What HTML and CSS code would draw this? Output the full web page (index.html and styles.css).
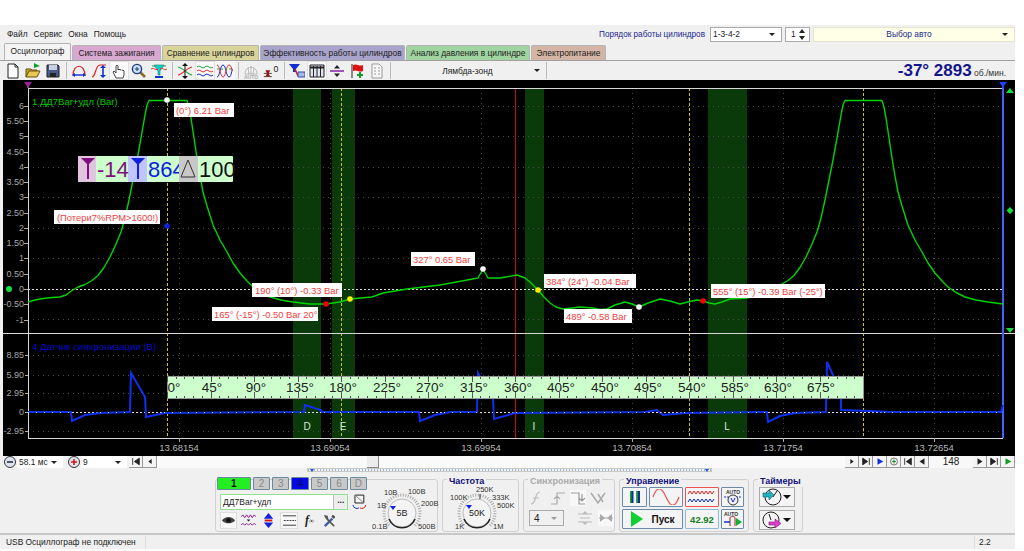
FILE: index.html
```html
<!DOCTYPE html>
<html>
    <head>
        <meta charset="utf-8">
        <title>Осциллограф</title>
        <link rel="stylesheet" href="styles.css">
    </head>
    <body>
        <div class="app">
            <div class="menubar">
                <span class="menuitem">Файл</span>
                <span class="menuitem">Сервис</span>
                <span class="menuitem">Окна</span>
                <span class="menuitem">Помощь</span>
                <span class="orderlabel">Порядок работы цилиндров</span>
                <div class="combo ordercombo"><span>1-3-4-2</span><i class="arrow"></i></div>
                <div class="combo spin"><span>1</span>
                    <svg width="8" height="11" viewBox="0 0 8 11"><path d="M4 0l3 4H1zM4 11L1 7h6z" fill="#222"/></svg>
                </div>
                <div class="combo autocombo"><span class="autotext">Выбор авто</span><i class="arrow"></i></div>
            </div>

            <div class="tabs">
                <div class="tab active">Осциллограф</div>
                <div class="tab t-purple">Система зажигания</div>
                <div class="tab t-yellow">Сравнение цилиндров</div>
                <div class="tab t-violet">Эффективность работы цилиндров</div>
                <div class="tab t-green">Анализ давления в цилиндре</div>
                <div class="tab t-brown">Электропитание</div>
            </div>

            <div class="toolbar">
                <div class="tool"><svg viewBox="0 0 16 16"><path d="M3 1h7l3 3v11H3z" fill="#fff" stroke="#222"/><path d="M10 1v3h3" fill="none" stroke="#222"/></svg></div>
                <div class="tool"><svg viewBox="0 0 16 16"><path d="M1 14V6h5l1 1h5v2H4z" fill="#c8a030" stroke="#6a5010"/><path d="M1 14l3-6h11l-3 6z" fill="#e8c850" stroke="#6a5010"/><path d="M9 5V0l6 3z" fill="#10a030"/></svg></div>
                <div class="tool"><svg viewBox="0 0 16 16"><path d="M2 2h11l1 1v11H2z" fill="#4a5a8a" stroke="#222"/><path d="M4 2h8v5H4z" fill="#c8d0e0"/><path d="M5 10h6v4H5z" fill="#222"/></svg></div>
                <i class="sep"></i>
                <div class="tool"><svg viewBox="0 0 16 16"><path d="M2 13C2 0 14 0 14 13" fill="none" stroke="#e02020" stroke-width="1.2"/><path d="M1 12l3-2v4zM15 12l-3-2v4z" fill="#1030d0"/><path d="M3 12h10" stroke="#1030d0" stroke-width="1.4"/></svg></div>
                <div class="tool"><svg viewBox="0 0 16 16"><path d="M1 14C5 14 4 2 9 2h6" fill="none" stroke="#e02020" stroke-width="1.2"/><path d="M12 2l-3 3h6zM12 15l-3-3h6z" fill="#1030d0"/><path d="M12 4v9" stroke="#1030d0" stroke-width="1.6"/></svg></div>
                <div class="tool on"><svg viewBox="0 0 16 16"><path d="M5 15L2 9l1-1 2 2V3l1-1 1 1v4l1-1 1 1 1-.5 1 1 1-.5 1 1v4l-1 3z" fill="#fff" stroke="#333" stroke-width=".9"/></svg></div>
                <div class="tool"><svg viewBox="0 0 16 16"><path d="M9 9l5 5" stroke="#8a6a30" stroke-width="2.6"/><circle cx="6" cy="6" r="4.6" fill="#c8e0f8" stroke="#203a80" stroke-width="1.4"/><path d="M4 6h4M6 4v4" stroke="#203a80"/></svg></div>
                <div class="tool"><svg viewBox="0 0 16 16"><path d="M3 2h10L9 8v4H7V8z" fill="#10d0c0" stroke="#108080" stroke-width=".6"/><path d="M0 6c3-2 4 2 7 0M9 6c3-2 4 2 7 0" fill="none" stroke="#e03030"/><path d="M1 3h3M12 3h3" stroke="#20a020"/><path d="M4 14h8" stroke="#1030d0" stroke-width="2"/></svg></div>
                <i class="sep"></i>
                <div class="tool"><svg viewBox="0 0 16 16"><path d="M1 4c5 1 9 7 14 8" fill="none" stroke="#20b040" stroke-width="1.1"/><path d="M1 12c5-1 9-7 14-8" fill="none" stroke="#e03030" stroke-width="1.1"/><path d="M8 0l-3 3h6zM8 16l-3-3h6z" fill="#111"/><path d="M8 3v10" stroke="#111"/></svg></div>
                <div class="tool on"><svg viewBox="0 0 16 16"><path d="M0 4c3-3 5 3 8 0s5 3 8 0" fill="none" stroke="#20a040"/><path d="M0 8c3-3 5 3 8 0s5 3 8 0" fill="none" stroke="#e03030"/><path d="M0 12c3-3 5 3 8 0s5 3 8 0" fill="none" stroke="#1030d0"/></svg></div>
                <div class="tool on2"><svg viewBox="0 0 16 16"><path d="M0 14C3 14 3 2 6 2s3 12 6 12 2-8 4-8" fill="none" stroke="#1030d0"/><path d="M0 2c3 0 3 12 6 12s3-12 6-12 2 6 4 6" fill="none" stroke="#e03030"/><path d="M0 6h16" stroke="#20a040" stroke-dasharray="2 2"/></svg></div>
                <i class="sep"></i>
                <div class="tool"><svg viewBox="0 0 16 16"><path d="M2 11C2 2 14 2 14 11zM8 3v8M5 5l1 6M11 5l-1 6" fill="#f4f4f4" stroke="#aaa" stroke-width=".8"/><text x="8" y="15.5" class="tiny gray" text-anchor="middle">AUTO</text></svg></div>
                <div class="tool"><svg viewBox="0 0 20 16"><text x="13" y="9" class="num">0</text><path d="M1 11h10M1 15h10" stroke="#222"/><path d="M3 7h6L7 11l2 4H3l2-4z" fill="#a01010"/></svg></div>
                <i class="sep"></i>
                <div class="tool"><svg viewBox="0 0 16 16"><path d="M0 1h11L7 6v3H4V6z" fill="#1030d0"/><path d="M6 6l3 7" stroke="#e02020" stroke-width="1.6"/><path d="M9 9h7v5H9z" fill="#a8b8e8" stroke="#3050a0"/></svg></div>
                <div class="tool on"><svg viewBox="0 0 16 16"><path d="M1 2h14v12H1z" fill="#dfe4f0" stroke="#222"/><path d="M1 4.5h14" stroke="#222" stroke-width="2"/><path d="M4.5 3v11M8 3v11M11.5 3v11" stroke="#222"/></svg></div>
                <div class="tool"><svg viewBox="0 0 16 16"><path d="M1 8h14" stroke="#8010a0" stroke-width="1.4"/><path d="M8 2l-3 3.5h6zM8 14l-3-3.500h6z" fill="#222"/></svg></div>
                <div class="tool"><svg viewBox="0 0 16 16"><path d="M3 1v14" stroke="#222"/><path d="M4 2c4-2 6 2 10 0v6c-4 2-6-2-10 0z" fill="#e01010"/><path d="M8 12h6M11 9v6" stroke="#10a030" stroke-width="2"/></svg></div>
                <div class="tool"><svg viewBox="0 0 16 16"><path d="M3 1h7l3 3v11H3z" fill="#f8f8f8" stroke="#999"/><path d="M5 5h2M5 8h2M5 11h2M9 5h2M9 8h2M9 11h2" stroke="#999"/></svg></div>
                <i class="sep"></i>
                <div class="lambda"><span class="lambdatext">Лямбда-зонд</span><i class="arrow"></i></div>
                <i class="sep"></i>
                <div class="rpm"><b>-37° 2893</b> <small>об./мин.</small></div>
            </div>

            <svg class="scope" width="1012" height="376" viewBox="3 80 1012 376">
                <path class="band" d="M293 88h28v350h-28zM332 88h23v350h-23zM525 88h19v350h-19zM708 88h39v350h-39z"/>
                <path class="grid" d="M28 106h975M28 136.500h975M28 167h975M28 197.500h975M28 228h975M28 258h975M28 319.500h975M28 355h975M28 375h975M28 393h975M28 431h975"/>
                <path class="grid" d="M179 88v350M330 88v350M481 88v350M632 88v350M783 88v350M934 88v350"/>
                <path class="zero" d="M28 289h975M28 412h975"/>
                <path class="cursor" d="M167 88v350M341 88v350M689 88v350M863 88v350"/>
                <path class="redline" d="M515 88v350"/>

                <path class="axis" d="M3 333h1012M28 88h975M28 438h975M28 88v350"/>
                <path class="rightaxis" d="M1003 88v350"/>
                <path class="ticks" d="M24 106h4M24 121h4M24 136h4M24 152h4M24 167h4M24 182h4M24 197h4M24 213h4M24 228h4M24 243h4M24 258h4M24 274h4M24 289h4M24 304h4M24 320h4"/>
                <path class="ticks" d="M25 355h3M25 375h3M25 393h3M25 412h3M25 431h3M179 438v4M330 438v4M481 438v4M632 438v4M783 438v4M934 438v4"/>

                <g class="ylabels">
                    <text x="24" y="109">6</text><text x="24" y="124">5.50</text><text x="24" y="139">5</text>
                    <text x="24" y="155">4.50</text><text x="24" y="170">4</text><text x="24" y="185">3.50</text>
                    <text x="24" y="200">3</text><text x="24" y="216">2.50</text><text x="24" y="231">2</text>
                    <text x="24" y="246">1.50</text><text x="24" y="261">1</text><text x="24" y="277">0.50</text>
                    <text x="24" y="292">0</text><text x="24" y="307">-0.50</text><text x="24" y="323">-1</text>
                    <text x="24" y="358">8.85</text><text x="24" y="378">5.90</text><text x="24" y="396">2.95</text>
                    <text x="24" y="415">0</text><text x="24" y="434">-2.95</text>
                </g>
                <g class="xlabels">
                    <text x="179" y="451">13.68154</text><text x="330" y="451">13.69054</text><text x="481" y="451">13.69954</text>
                    <text x="632" y="451">13.70854</text><text x="783" y="451">13.71754</text><text x="934" y="451">13.72654</text>
                </g>

                <text x="32" y="105" class="title1">1 ДД7Bar+удл (Bar)</text>
                <text x="32" y="350" class="title4">4 Датчик синхронизации (В)</text>

                <polyline class="trace4" points="28,412 71,412 72,421 85,415 100,413 130,412 131,373 145,397 146,417 165,413 304,412 305,405 321,410 322,412 419,412 420,421 435,415 451,412 477,412 478,373 493,398 494,419 515,413 645,412 657,410 663,415 685,413 767,412 768,422 780,416 795,413 826,412 827,362 833,375 841,398 841,410 870,411 890,412 1001,412 1003,405"/>
                <path class="zeroover" d="M28 412h975"/>
                <polyline class="trace1" points="28,302 35,300 43,298.500 52,297.500 60,297 66,295 72,290.500 78,287 85,284.500 92,280.500 98,275.500 104,267.500 110,257 116,244 121,232 125,218 129,200 133,180 137,160 141,138 145,115 147,105 149,100.500 187,100.500 189,107 191,118 194,138 197,158 200,176 203,192 207,206 213,225 220,240 227,252 233,263 240,273 247,281 253,287 261,292.500 270,297 281,300 293,302 310,304 326,304 340,302 350,299 372,297 383,293 407,289 440,285 478,278 483,269 488,278 500,278 517,275 525,278 530,282 538,290 544,297 550,303 556,307 563,309 572,308 580,307 593,308 600,309.500 607,309 615,305 625,302 632,304 639,307 648,303 660,299 670,301 680,304 688,302 697,300 703,301 709,303 715,304 722,302 730,299 747,298 760,295 774,287 781,284.500 788,280.500 794,275.500 800,267.500 806,257 812,244 817,232 821,218 825,200 829,180 833,160 837,138 841,115 843,105 845,100.500 882,100.500 884,107 886,118 889,138 892,158 895,176 898,192 902,206 908,225 915,240 922,252 928,263 935,273 942,281 948,287 956,292.500 965,297 976,300 988,302 1003,304"/>

                <path class="mark-purple" d="M24 82h8l-3 4v2h-2v-2z"/>
                <path class="mark-blue" d="M999 82h8l-3 4v2h-2v-2z"/>
                <circle cx="9" cy="289" r="3" class="mark-green"/>
                <path class="mark-green" d="M1010 88l4 5h-8zM1010 207l3.500 3.500-3.500 3.500-3.500-3.500zM1010 333l-4-5h8z"/>

                <circle cx="167" cy="100" r="2.800" fill="#fff"/>
                <circle cx="167" cy="226" r="2.800" fill="#1020e0"/>
                <circle cx="326" cy="304" r="2.800" fill="#f00000"/>
                <circle cx="350" cy="299" r="2.800" fill="#ffee00"/>
                <circle cx="483" cy="269" r="2.800" fill="#fff"/>
                <circle cx="538" cy="290" r="2.800" fill="#ffee00"/>
                <circle cx="639" cy="307" r="2.800" fill="#fff"/>
                <circle cx="703" cy="301" r="2.800" fill="#f00000"/>

                <g class="letters">
                    <text x="307" y="430">D</text><text x="343" y="430">E</text><text x="534" y="430">I</text><text x="727" y="430">L</text>
                </g>

                <rect class="tagbox" x="174" y="103" width="60" height="14"/><text class="tag" x="176" y="114">(0°) 6.21 Bar</text>
                <rect class="tagbox" x="54" y="210" width="106" height="14"/><text class="tag" x="57" y="221">(Потери7%RPM&gt;1600!)</text>
                <rect class="tagbox" x="252" y="283" width="90" height="14"/><text class="tag" x="255" y="294">190° (10°) -0.33 Bar</text>
                <rect class="tagbox" x="212" y="307" width="106" height="14"/><text class="tag" x="214" y="318">165° (-15°) -0.50 Bar 20°</text>
                <rect class="tagbox" x="411" y="252" width="64" height="14"/><text class="tag" x="413" y="263">327° 0.65 Bar</text>
                <rect class="tagbox" x="544" y="274" width="92" height="14"/><text class="tag" x="546" y="285">384° (24°) -0.04 Bar</text>
                <rect class="tagbox" x="564" y="309" width="68" height="14"/><text class="tag" x="566" y="320">489° -0.58 Bar</text>
                <rect class="tagbox" x="711" y="284" width="114" height="14"/><text class="tag" x="713" y="295">555° (15°) -0.39 Bar (-25°)</text>

                <rect class="ruler" x="167" y="376" width="696" height="22"/>
                <path class="rulertick" d="M167 377.500h696M167 396.500h696"/>
                <path class="rulermajor" d="M167 379h696M167 395h696"/>
                <g class="rulerlabels">
                    <text x="174" y="392">0°</text><text x="212" y="392">45°</text><text x="256" y="392">90°</text>
                    <text x="300" y="392">135°</text><text x="343" y="392">180°</text><text x="387" y="392">225°</text>
                    <text x="430" y="392">270°</text><text x="474" y="392">315°</text><text x="518" y="392">360°</text>
                    <text x="561" y="392">405°</text><text x="605" y="392">450°</text><text x="648" y="392">495°</text>
                    <text x="692" y="392">540°</text><text x="735" y="392">585°</text><text x="778" y="392">630°</text>
                    <text x="821" y="392">675°</text>
                </g>

                <rect x="78" y="156" width="155" height="26" rx="1" fill="#ccffcc"/>
                <rect x="78" y="156" width="18" height="26" fill="#e0c4e0"/>
                <rect x="128" y="156" width="19" height="26" fill="#c0c4ff"/>
                <path d="M81 158h14l-6 6v15h-2v-15z" fill="#801080"/>
                <path d="M131 158h14l-6 6v15h-2v-15z" fill="#1020e0"/>
                <g class="bigval">
                    <text x="97" y="177" fill="#801080">-14</text>
                    <text x="148" y="177" fill="#1020e0">864</text>
                </g>
                <rect x="179" y="156" width="19" height="26" fill="#c8c8c8"/>
                <path d="M188 160l7 17h-14z" fill="none" stroke="#333"/>
                <g class="bigval">
                    <text x="199" y="177" fill="#111">100</text>
                </g>
            </svg>

            <div class="scrollrow">
                <div class="pm"><svg viewBox="0 0 14 14"><circle cx="7" cy="7" r="5.500" fill="#dfe4f0" stroke="#333"/><path d="M4 7h6" stroke="#223" stroke-width="1.500"/></svg></div>
                <div class="combo timecombo"><span>58.1 мс</span><i class="arrow"></i></div>
                <div class="pm"><svg viewBox="0 0 14 14"><circle cx="7" cy="7" r="5.500" fill="#dfe4f0" stroke="#333"/><path d="M4 7h6M7 4v6" stroke="#d01010" stroke-width="1.500"/></svg></div>
                <div class="combo ninecombo"><span>9</span><i class="arrow"></i></div>
                <div class="nav first"><svg viewBox="0 0 12 10"><path d="M2 1v8M10 1L4 5l6 4z" fill="#222" stroke="#222"/></svg></div>
                <div class="nav"><svg viewBox="0 0 12 10"><path d="M8 2L4 5l4 3z" fill="#222"/></svg></div>
                <div class="track"><div class="thumb"></div></div>
                <div class="nav"><svg viewBox="0 0 12 10"><path d="M4 2l4 3-4 3z" fill="#222"/></svg></div>
                <div class="nav"><svg viewBox="0 0 12 10"><path d="M10 1v8M2 1l6 4-6 4z" fill="#222" stroke="#222"/></svg></div>
                <div class="nav"><svg viewBox="0 0 12 10"><path d="M3 1l7 4-7 4z" fill="#1030e0"/></svg></div>
                <div class="nav"><svg viewBox="0 0 14 14"><circle cx="7" cy="7" r="5.500" fill="#e8f0e8" stroke="#333"/><path d="M4 7h6M7 4v6" stroke="#109020" stroke-width="1.500"/></svg></div>
                <div class="nav"><svg viewBox="0 0 12 10"><path d="M2 1v8M10 1L4 5l6 4z" fill="#222" stroke="#222"/></svg></div>
                <div class="nav"><svg viewBox="0 0 12 10"><path d="M9 1L3 5l6 4z" fill="#222"/></svg></div>
                <div class="counter">148</div>
                <div class="nav"><svg viewBox="0 0 12 10"><path d="M3 1l6 4-6 4z" fill="#222"/></svg></div>
                <div class="nav"><svg viewBox="0 0 12 10"><path d="M10 1v8M2 1l6 4-6 4z" fill="#222" stroke="#222"/></svg></div>
                <div class="nav"><svg viewBox="0 0 12 10"><path d="M3 1l7 4-7 4z" fill="#10a020"/></svg></div>
            </div>

            <div class="strip"><div class="stripbar"><i class="stripmark"></i><i class="stripmark"></i></div></div>

            <div class="lower">
                <div class="group g-channel">
                    <div class="chanleft">
                        <div class="chans">
                            <div class="chan green">1</div><div class="chan">2</div><div class="chan">3</div>
                            <div class="chan blue">4</div><div class="chan">5</div><div class="chan">6</div><div class="chan">D</div>
                        </div>
                        <div class="inputrow">
                            <div class="sensor"><span>ДД7Bar+удл</span><b>...</b></div>
                            <svg width="15" height="16" viewBox="0 0 15 16"><path d="M3 1h9v8H3z" fill="#f4f4f4" stroke="#222"/><path d="M3 1l9 8" stroke="#888"/><path d="M1 11a4 4 0 0 0 6 3" fill="none" stroke="#1030d0"/><path d="M14 11a4 4 0 0 1-6 3" fill="none" stroke="#e01010"/></svg>
                        </div>
                        <div class="chanicons">
                            <div class="cicon on"><svg viewBox="0 0 16 16"><path d="M1 8c3-5 11-5 14 0-3 4-11 4-14 0z" fill="#444"/><circle cx="8" cy="8" r="2.500" fill="#111"/></svg></div>
                            <div class="cicon"><svg viewBox="0 0 16 16"><path d="M0 4l2-2 2 3 2-3 2 3 2-3 2 3 2-3 2 2" fill="none" stroke="#901090"/><path d="M0 13l2-2 2 2 2-2 2 2 2-2 2 2 2-2 2 2" fill="none" stroke="#901090"/><path d="M6 7h4l-2 2z" fill="#222"/></svg></div>
                            <div class="cicon"><svg viewBox="0 0 16 16"><path d="M8 0L3 6h10zM8 16l-5-6h10z" fill="#1020e0"/><path d="M4 8h8" stroke="#e01010" stroke-width="2"/></svg></div>
                            <div class="cicon on wide"><svg viewBox="0 0 16 16"><path d="M1 3h14M1 8h14M1 13h14" stroke="#333"/><path d="M1 8h14" stroke="#fff" stroke-dasharray="1 2"/></svg></div>
                            <div class="cicon fx">f<small>∞</small></div>
                            <div class="cicon"><svg viewBox="0 0 16 16"><path d="M3 14l8-8" stroke="#4060a0" stroke-width="2.600"/><path d="M13 14L5 6" stroke="#555" stroke-width="1.600"/><path d="M2 2l4 1 1 4-3-1z" fill="#555"/><path d="M11 2a3 3 0 0 1 3 3l-2 1-2-2z" fill="#555"/></svg></div>
                        </div>
                    </div>
                    <svg class="dial" width="71" height="51" viewBox="366 480 71 51">
                        <path class="dialticks" d="M388 525.500A18 18 0 1 1 414 525.500"/>
                        <circle class="dialface" cx="401" cy="513" r="14"/>
                        <path class="dialrim" d="M388 519a14 14 0 0 0 26 0"/>
                        <path d="M389 506h6l-3 4z" fill="#1020e0"/>
                        <text x="401" y="516" class="dialval">5В</text>
                        <g class="diallab">
                            <text x="371" y="529">0.1В</text><text x="376" y="508">1В</text><text x="383" y="495">10В</text>
                            <text x="407" y="494">100В</text><text x="420" y="506">200В</text><text x="417" y="529">500В</text>
                        </g>
                    </svg>
                </div>

                <div class="group g-freq">
                    <h4>Частота</h4>
                    <svg class="dial" width="75" height="44" viewBox="443 487 75 44">
                        <path class="dialticks" d="M464 525.500A18 18 0 1 1 490 525.500"/>
                        <circle class="dialface" cx="477" cy="513" r="14"/>
                        <path class="dialrim" d="M464 519a14 14 0 0 0 26 0"/>
                        <path d="M466 505h6l-3 4z" fill="#1020e0"/>
                        <path d="M480 494v5" stroke="#333"/>
                        <text x="477" y="516" class="dialval">50K</text>
                        <g class="diallab">
                            <text x="450" y="500">100K</text><text x="476" y="492">250K</text><text x="492" y="500">333K</text>
                            <text x="497" y="508">500K</text><text x="455" y="529">1K</text><text x="493" y="529">1M</text>
                        </g>
                    </svg>
                </div>

                <div class="group g-sync">
                    <h4 class="off">Синхронизация</h4>
                    <div class="syncgrid">
                        <svg viewBox="0 0 16 16"><path d="M1 14c6 0 3-12 9-12M3 8h6" fill="none" stroke="#bbb" stroke-width="1.200"/></svg>
                        <svg viewBox="0 0 16 16"><path d="M1 14h6V3h8M7 12V6M4 9l3-3 3 3" fill="none" stroke="#aaa" stroke-width="1.200"/></svg>
                        <svg class="lit" viewBox="0 0 16 16"><path d="M1 3h8v11h6M12 4v7M9 8l3 3 3-3" fill="none" stroke="#999" stroke-width="1.200"/></svg>
                        <svg viewBox="0 0 16 16"><path d="M1 3l7 10 7-10M8 4l5 8" fill="none" stroke="#aaa" stroke-width="1.500"/></svg>
                    </div>
                    <div class="syncrow">
                        <div class="combo synccombo"><span>4</span><i class="arrow gray"></i></div>
                        <svg viewBox="0 0 16 16"><path d="M1 4h14M3 8h10M1 12h14" stroke="#bbb"/><path d="M8 1l3 3H5zM8 15l-3-3h6z" fill="#bbb"/></svg>
                        <svg class="lit" viewBox="0 0 16 16"><path d="M1 8h14" stroke="#aaa"/><path d="M2 4l5 4-5 4zM14 4L9 8l5 4z" fill="#aaa"/></svg>
                    </div>
                </div>

                <div class="group g-ctrl">
                    <h4>Управление</h4>
                    <div class="ctrlgrid">
                        <div class="cbtn"><svg width="12" height="14" viewBox="0 0 12 14"><path d="M1 1h3.500v12H1z" fill="#103090"/><path d="M1 1h1.500v12H1z" fill="#10a030"/><path d="M7.500 1H11v12H7.500z" fill="#103090"/><path d="M7.500 1H9v12H7.500z" fill="#10a030"/></svg></div>
                        <div class="cbtn"><svg width="28" height="16" viewBox="0 0 28 16"><path d="M1 8C5-3 9-3 14 8s9 11 13 0" fill="none" stroke="#f05050" stroke-width="1.200"/></svg></div>
                        <div class="cbtn redbtn"><svg width="30" height="16" viewBox="0 0 30 16"><path d="M1 5l2-3 2 3 2-3 2 3 2-3 2 3 2-3 2 3 2-3 2 3 2-3 2 3 2-3" fill="none" stroke="#e02020"/><path d="M1 13l2-3 2 3 2-3 2 3 2-3 2 3 2-3 2 3 2-3 2 3 2-3 2 3 2-3" fill="none" stroke="#1030d0"/></svg></div>
                        <div class="cbtn"><svg width="20" height="18" viewBox="0 0 20 18"><text x="10" y="6" class="tiny" text-anchor="middle">AUTO</text><path d="M1 9h18" stroke="#1030d0" stroke-dasharray="2 1"/><circle cx="10" cy="12" r="5" fill="#eef" stroke="#333"/><path d="M8 10l2 4 2-4" fill="none" stroke="#1030d0"/></svg></div>
                        <div class="cbtn run"><svg width="14" height="16" viewBox="0 0 14 16"><path d="M1 0l12 8-12 8z" fill="#10d030"/></svg><b>Пуск</b></div>
                        <div class="cbtn value">42.92</div>
                        <div class="cbtn"><svg width="20" height="18" viewBox="0 0 20 18"><text x="8" y="6" class="tiny" text-anchor="middle">AUTO</text><path d="M7 16V8c0-2 5-2 5 0v8" fill="none" stroke="#a02020"/><path d="M1 12h6" stroke="#1030d0" stroke-width="1.500"/><path d="M13 8l6 4-6 4z" fill="#10b030"/></svg></div>
                    </div>
                </div>

                <div class="group g-timer">
                    <h4>Таймеры</h4>
                    <div class="timerbtn"><svg width="20" height="18" viewBox="0 0 20 18"><circle cx="11" cy="9" r="8" fill="#f4f4f4" stroke="#222"/><path d="M11 9l4-6" stroke="#222"/><path d="M1 5h6V2l5 5-5 5V9H1z" fill="#20b0c0" stroke="#106070" stroke-width=".6"/></svg><i class="arrow big"></i></div>
                    <div class="timerbtn"><svg width="20" height="18" viewBox="0 0 20 18"><circle cx="9" cy="9" r="8" fill="#f4f4f4" stroke="#222"/><path d="M9 9L7 3" stroke="#222"/><path d="M7 11h6V8l6 4.500-6 4.500v-3H7z" fill="#e040d0" stroke="#801070" stroke-width=".6"/></svg><i class="arrow big"></i></div>
                </div>
            </div>

            <div class="status">
                <div class="cell first">USB Осциллограф не подключен</div>
                <div class="cell grow"></div>
                <div class="cell last">2.2</div>
            </div>
        </div>
    </body>
</html>
```

FILE: styles.css
```css
html, body {
    margin: 0;
    background: #fff;
}
body {
    padding-top: 25px;
    font-family: "Liberation Sans", Arial, sans-serif;
    font-size: 8.4px;
    color: #222;
}
.app {
    width: 1015px;
    background: #f0f0f0;
}
svg {
    display: block;
}

/* top rows */
.menubar {
    height: 18px;
    display: flex;
    align-items: center;
    padding-left: 7px;
    box-sizing: border-box;
}
.menuitem {
    margin-right: 6px;
}
.orderlabel {
    margin-left: auto;
    margin-right: 5px;
    font-size: 8.2px;
    color: #1a2a90;
}
.combo {
    background: #fff;
    border: 1px solid #aaa;
    display: flex;
    align-items: center;
    box-sizing: border-box;
    height: 15px;
    padding: 0 3px 0 2px;
    justify-content: space-between;
}
.arrow {
    width: 0;
    height: 0;
    border: 3px solid transparent;
    border-top: 3px solid #222;
    border-bottom: 0;
    margin-right: 3px;
}
.arrow.gray {
    border-top-color: #999;
}
.arrow.big {
    border-width: 4px;
    border-bottom: 0;
    border-top-color: #111;
    margin: 0;
}
.ordercombo {
    width: 72px;
    margin-right: 3px;
}
.spin {
    width: 25px;
    margin-right: 3px;
    padding: 0 3px 0 5px;
}
.autocombo {
    width: 202px;
    background: #ffffe8;
    border-color: #e4e4d0;
    color: #1a2a90;
}
.autotext {
    flex: 1;
    text-align: center;
}

.tabs {
    height: 17px;
    display: flex;
    align-items: flex-end;
    padding-left: 4px;
    border-bottom: 1px solid #a0a0a0;
    box-sizing: content-box;
}
.tab {
    height: 15px;
    line-height: 15px;
    padding: 0 2px;
    margin-right: 1px;
    border: 1px solid #b4b4b4;
    border-bottom: 0;
    border-radius: 2px 2px 0 0;
    box-sizing: border-box;
    white-space: nowrap;
    text-align: center;
}
.tab.active {
    height: 17px;
    background: #f4f4f4;
    width: 67px;
}
.t-purple { background: #d8a8d0; width: 89px; }
.t-yellow { background: #d8d49a; width: 97px; }
.t-violet { background: #a8a4cc; width: 145px; }
.t-green { background: #a0d4a0; width: 124px; }
.t-brown { background: #d4b4a4; width: 75px; }

.toolbar {
    height: 19px;
    display: flex;
    align-items: center;
    padding-left: 3px;
}
.tool {
    width: 20px;
    height: 19px;
    display: flex;
    align-items: center;
    justify-content: center;
    box-sizing: border-box;
}
.tool svg {
    width: 16px;
    height: 16px;
}
.tool.on {
    background: #fafafa;
    border: 1px solid #e0e0e0;
}
.tool.on2 {
    background: #f6f6f6;
}
.sep {
    width: 1px;
    height: 17px;
    margin: 0 2px 0 3px;
    background: #bbb;
}
.tiny {
    font-size: 5px;
    font-weight: bold;
    fill: #333;
}
.tiny.gray {
    fill: #aaa;
}
.num {
    font-size: 11px;
    fill: #222;
}
.lambda {
    width: 142px;
    margin-left: 8px;
    display: flex;
    align-items: center;
}
.lambdatext {
    flex: 1;
    text-align: center;
}
.rpm {
    margin-left: auto;
    margin-right: 9px;
    color: #14148c;
    white-space: nowrap;
}
.rpm b {
    font-size: 17px;
}
.rpm small {
    font-size: 8.5px;
    color: #333;
}

/* scope picture */
.scope {
    margin-left: 3px;
    background: #000;
}
.band { fill: #0a3a0a; }
.grid, .zero, .cursor, .redline, .axis, .rightaxis, .ticks, .zeroover {
    fill: none;
    shape-rendering: crispEdges;
}
.grid {
    stroke: #4a4a4a;
    stroke-dasharray: 1 4;
}
.zero, .zeroover {
    stroke: #ddd;
    stroke-dasharray: 2 2;
}
.zeroover {
    stroke-dasharray: 1 7;
}
.cursor {
    stroke: #c8c810;
    stroke-dasharray: 3 2;
}
.redline { stroke: #c01010; }
.axis { stroke: #d8d8d8; }
.rightaxis { stroke: #4060ff; stroke-width: 1.5; }
.ticks { stroke: #aaa; }
.ylabels text {
    font-size: 9px;
    fill: #a8a8a8;
    text-anchor: end;
}
.xlabels text {
    font-size: 9.5px;
    fill: #b8b8b8;
    text-anchor: middle;
}
.title1 {
    font-size: 9.5px;
    fill: #00c800;
}
.title4 {
    font-size: 9.6px;
    fill: #0808c8;
}
.trace1 {
    fill: none;
    stroke: #00d400;
    stroke-width: 1.4;
    stroke-linejoin: round;
}
.trace4 {
    fill: none;
    stroke: #1030f0;
    stroke-width: 2;
}
.mark-purple { fill: #a020a0; }
.mark-blue { fill: #2040ff; }
.mark-green { fill: #10e040; }
.letters text {
    font-size: 10px;
    fill: #d8e8d8;
    text-anchor: middle;
}
.tagbox {
    fill: #fff;
}
.tag {
    font-size: 9.4px;
    fill: #f04040;
}
.ruler {
    fill: #ccffcc;
    stroke: #999;
    shape-rendering: crispEdges;
}
.rulertick {
    fill: none;
    stroke: #555;
    stroke-width: 2;
    stroke-dasharray: 1 7.700;
    shape-rendering: crispEdges;
}
.rulermajor {
    fill: none;
    stroke: #555;
    stroke-width: 6;
    stroke-dasharray: 1 42.500;
    shape-rendering: crispEdges;
}
.rulerlabels text {
    font-size: 13.500px;
    fill: #222;
    text-anchor: middle;
}
.bigval text {
    font-size: 22px;
}

/* slider row */
.scrollrow {
    height: 12px;
    display: flex;
    align-items: center;
    padding-left: 3px;
}
.pm {
    width: 14px;
    height: 14px;
    flex: none;
}
.timecombo {
    width: 46px;
    border: 0;
    background: #fff;
    margin-right: 4px;
    height: 12px;
}
.ninecombo {
    width: 46px;
    border: 0;
    background: #fff;
    height: 12px;
    margin-right: 2px;
}
.nav {
    width: 14px;
    height: 12px;
    flex: none;
    background: #f4f4f4;
    border-right: 1px solid #999;
    border-bottom: 1px solid #999;
    box-sizing: border-box;
    display: flex;
    align-items: center;
    justify-content: center;
}
.nav svg {
    width: 10px;
    height: 9px;
}
.track {
    flex: 1;
    height: 12px;
    background: #fafafa;
}
.thumb {
    width: 12px;
    height: 12px;
    margin-left: 210px;
    background: #ececec;
    border-right: 1px solid #888;
    border-bottom: 1px solid #888;
    box-sizing: border-box;
}
.counter {
    width: 44px;
    height: 12px;
    line-height: 12px;
    text-align: center;
    background: #f8f8f8;
    font-size: 10px;
}

.strip {
    height: 5px;
    padding-left: 307px;
}
.stripbar {
    width: 405px;
    height: 4px;
    background: repeating-linear-gradient(90deg, #9ab4e0 0 1px, #f4f6fa 1px 3px);
    border: 1px solid #c8c8c8;
    box-sizing: border-box;
    display: flex;
    justify-content: space-between;
    padding: 0 2px;
}
.stripmark {
    width: 0;
    height: 0;
    border: 2px solid transparent;
    border-top: 3px solid #2050e0;
    border-bottom: 0;
}

/* lower panel */
.lower {
    display: flex;
    gap: 4px;
    padding: 6px 0 1px 215px;
    border-bottom: 2px solid #c8c8c8;
}
.group {
    height: 53px;
    border: 1px solid #d0d0d0;
    border-radius: 3px;
    box-sizing: border-box;
}
.group h4 {
    margin: -5px 0 0 4px;
    padding: 0 2px;
    width: fit-content;
    background: #f0f0f0;
    font-size: 9px;
    line-height: 12px;
    color: #10107c;
}
.group h4.off {
    color: #aaa;
}
.g-channel {
    width: 223px;
    display: flex;
}
.g-freq { width: 77px; }
.g-sync { width: 92px; }
.g-ctrl { width: 130px; }
.g-timer { width: 50px; }
.chanleft {
    width: 150px;
    padding-left: 1px;
    flex: none;
}
.chans {
    display: flex;
    gap: 2px;
    margin-top: -3px;
}
.chan {
    width: 18px;
    height: 13px;
    line-height: 11px;
    text-align: center;
    font-size: 10px;
    background: #c8c8c8;
    color: #888;
    border: 1px solid #6a8aa0;
    border-radius: 1px;
    box-sizing: border-box;
}
.chan.green {
    width: 35px;
    background: #22ee22;
    color: #111;
    font-weight: bold;
}
.chan.blue {
    background: #0808e0;
    color: #001060;
}
.inputrow {
    display: flex;
    align-items: center;
    gap: 4px;
    margin: 4px 0 0 3px;
}
.sensor {
    width: 130px;
    height: 16px;
    border: 1px solid #90e090;
    background: #fff;
    box-sizing: border-box;
    display: flex;
    justify-content: space-between;
    align-items: center;
    padding-left: 2px;
    font-size: 8.5px;
}
.sensor b {
    width: 13px;
    height: 14px;
    line-height: 10px;
    text-align: center;
    background: #eee;
    border-left: 1px solid #bbb;
}
.chanicons {
    display: flex;
    align-items: center;
    gap: 3px;
    margin: 2px 0 0 3px;
}
.cicon {
    width: 17px;
    height: 17px;
    display: flex;
    align-items: center;
    justify-content: center;
    box-sizing: border-box;
}
.cicon svg {
    width: 15px;
    height: 15px;
}
.cicon.on {
    background: #f8f8f8;
    border: 1px solid #ddd;
}
.cicon.wide {
    width: 18px;
}
.cicon.fx {
    font-family: "Liberation Serif", serif;
    font-weight: bold;
    font-style: italic;
    font-size: 12px;
}
.cicon.fx small {
    font-size: 7px;
}
.dial {
    overflow: visible;
}
.dialticks {
    fill: none;
    stroke: #aaa;
    stroke-width: 3;
    stroke-dasharray: 1 1.500;
}
.dialface {
    fill: #f4f4f4;
    stroke: #bbb;
}
.dialrim {
    fill: none;
    stroke: #222;
    stroke-width: 1.600;
}
.dialval {
    font-size: 9px;
    fill: #222;
    text-anchor: middle;
}
.diallab text {
    font-size: 7.500px;
    fill: #333;
}
.syncgrid {
    display: flex;
    gap: 4px;
    margin: 3px 0 0 6px;
}
.syncgrid svg {
    width: 16px;
    height: 16px;
}
.lit {
    background: #f8f8f8;
}
.syncrow {
    display: flex;
    align-items: center;
    gap: 5px;
    margin: 4px 0 0 5px;
}
.syncrow svg {
    width: 16px;
    height: 16px;
}
.synccombo {
    width: 35px;
    height: 16px;
    background: #f0f0f0;
    padding-left: 4px;
    margin-right: 8px;
    font-size: 10px;
}
.ctrlgrid {
    display: grid;
    grid-template-columns: 25px 34px 34px 23px;
    grid-auto-rows: 20px;
    gap: 2px;
    margin: 0 0 0 2px;
}
.cbtn {
    background: #f4f4f4;
    border: 1px solid #6a8aaa;
    border-radius: 1px;
    box-sizing: border-box;
    display: flex;
    align-items: center;
    justify-content: center;
}
.redbtn {
    border-color: #f05050;
}
.run {
    grid-column: span 2;
    justify-content: flex-start;
    padding-left: 7px;
}
.run b {
    flex: 1;
    text-align: center;
    font-size: 10px;
    color: #111;
}
.value {
    color: #108020;
    font-size: 9.500px;
    font-weight: bold;
    border-color: #90b8d8;
}
.timerbtn {
    width: 36px;
    height: 20px;
    margin: 0 0 3px 5px;
    background: #f4f4f4;
    border: 1px solid #aaa;
    box-sizing: border-box;
    display: flex;
    align-items: center;
    justify-content: space-between;
    padding: 0 3px 0 2px;
}

.status {
    height: 13px;
    margin-top: 1px;
    display: flex;
}
.cell {
    border-left: 1px solid #ddd;
    line-height: 13px;
    padding-left: 3px;
}
.cell.first {
    width: 139px;
    padding-left: 6px;
    border-left: 0;
}
.cell.grow {
    flex: 1;
}
.cell.last {
    width: 36px;
    padding-left: 4px;
}
```
